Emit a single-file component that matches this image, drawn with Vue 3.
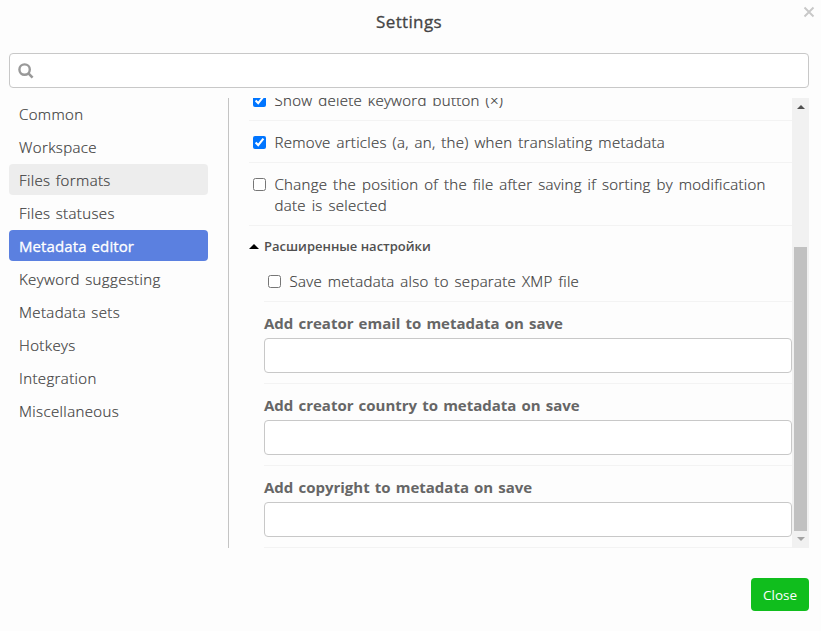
<script setup>
import { ref } from 'vue'

const sections = [
  { name: 'Common' },
  { name: 'Workspace' },
  { name: 'Files formats', hover: true },
  { name: 'Files statuses' },
  { name: 'Metadata editor', active: true },
  { name: 'Keyword suggesting' },
  { name: 'Metadata sets' },
  { name: 'Hotkeys' },
  { name: 'Integration' },
  { name: 'Miscellaneous' },
]

const options = ref([
  { label: 'Show delete keyword button (×)', checked: true },
  { label: 'Remove articles (a, an, the) when translating metadata', checked: true },
  {
    label: 'Change the position of the file after saving if sorting by modification date is selected',
    checked: false,
  },
])
const separateXmp = ref(false)

const fields = ref([
  { label: 'Add creator email to metadata on save', value: '' },
  { label: 'Add creator country to metadata on save', value: '' },
  { label: 'Add copyright to metadata on save', value: '' },
])
const query = ref('')
</script>

<template>
  <div class="dialog">
    <header class="head">
      <h1 class="title">Settings</h1>
      <button class="dismiss" type="button">
        <svg width="12" height="12" viewBox="0 0 12 12">
          <path d="M1.5 1.5 10.5 10.5M10.5 1.5 1.5 10.5" stroke="#c8c8c8" stroke-width="1.9" fill="none" />
        </svg>
      </button>
    </header>

    <label class="search">
      <svg width="16" height="16" viewBox="0 0 16 16" fill="none" stroke="#999">
        <circle cx="6.6" cy="6.6" r="5.2" stroke-width="2.4" />
        <path d="M10.4 10.4 14.6 14.6" stroke-width="2.6" />
      </svg>
      <input v-model="query" class="search-input" type="text" />
    </label>

    <div class="body">
      <nav class="nav">
        <div
          v-for="s in sections"
          :key="s.name"
          class="nav-item"
          :class="{ hover: s.hover, active: s.active }"
        >
          {{ s.name }}
        </div>
      </nav>

      <div class="pane">
        <div class="content">
          <label v-for="o in options" :key="o.label" class="option">
            <input v-model="o.checked" class="check" type="checkbox" />
            <span>{{ o.label }}</span>
          </label>
          <div class="group-head">
            <svg class="caret" width="10" height="5" viewBox="0 0 10 5"><path d="M0 5 5 0 10 5z" /></svg>
            <span>Расширенные настройки</span>
          </div>
          <div class="group">
            <label class="option nested">
              <input v-model="separateXmp" class="check" type="checkbox" />
              <span>Save metadata also to separate XMP file</span>
            </label>
            <label v-for="f in fields" :key="f.label" class="field">
              <span class="field-label">{{ f.label }}</span>
              <input v-model="f.value" class="field-input" type="text" />
            </label>
          </div>
        </div>
        <div class="scrollbar">
          <svg width="8" height="4" viewBox="0 0 8 4" fill="#505050"><path d="M0 4 4 0 8 4z" /></svg>
          <div class="thumb"></div>
          <svg width="8" height="4" viewBox="0 0 8 4" fill="#a3a3a3"><path d="M0 0h8L4 4z" /></svg>
        </div>
      </div>
    </div>

    <footer class="foot">
      <button class="close" type="button">Close</button>
    </footer>
  </div>
</template>

<style>
body {
  background: #fdfdfd;
}
</style>

<style scoped>
* {
  box-sizing: border-box;
}
.dialog {
  display: flex;
  flex-direction: column;
  height: 631px;
  padding: 0 12px 20px 9px;
  background: #fdfdfd;
  color: #3c3c3c;
  font-family: 'Open Sans', 'Noto Sans', sans-serif;
  font-size: 15px;
  font-weight: 300;
}
.head {
  position: relative;
  height: 53px;
}
.title {
  margin: 0;
  padding-top: 10px;
  font-size: 17px;
  line-height: 24px;
  font-weight: 400;
  letter-spacing: 0.35px;
  -webkit-text-stroke: 0.3px #444;
  text-align: center;
  color: #444;
}
.dismiss {
  position: absolute;
  top: 6px;
  right: -6px;
  display: flex;
  padding: 0;
  border: 0;
  background: none;
}
.search {
  display: flex;
  align-items: center;
  gap: 10px;
  height: 35px;
  padding: 0 9px 0 8px;
  border: 1px solid #c8c8c8;
  border-radius: 4px;
  background: #fff;
}
.search-input {
  flex: 1;
  border: 0;
  outline: 0;
  background: none;
  font: inherit;
}
.body {
  display: flex;
  height: 450px;
  margin-top: 10px;
}
.nav {
  display: flex;
  flex-direction: column;
  gap: 2px;
  width: 220px;
  padding-right: 20px;
  border-right: 1px solid #c4c4c4;
}
.nav-item {
  height: 31px;
  padding: 0 10px;
  border-radius: 4px;
  line-height: 32px;
  letter-spacing: 0.38px;
  word-spacing: 1px;
  white-space: nowrap;
  -webkit-text-stroke: 0.2px currentColor;
}
.nav-item.hover {
  background: #ededed;
}
.nav-item.active {
  background: #5b80e0;
  color: #fff;
  font-weight: 400;
  letter-spacing: 0.1px;
  -webkit-text-stroke: 0.3px #fff;
}
.pane {
  display: flex;
  flex: 1;
  min-width: 0;
  padding-left: 20px;
}
.content {
  display: flex;
  flex-direction: column;
  justify-content: flex-end;
  flex: 1;
  min-width: 0;
  overflow: hidden;
}
.option {
  display: flex;
  flex-shrink: 0;
  gap: 8.5px;
  padding: 11px 20px 9px 4px;
  border-bottom: 1px solid #f3f3f3;
  line-height: 21px;
  letter-spacing: 0.3px;
  word-spacing: 1.6px;
  -webkit-text-stroke: 0.2px currentColor;
}
.check {
  flex: none;
  width: 13px;
  height: 13px;
  margin: 4px 0 0;
}
.group-head {
  display: flex;
  flex-shrink: 0;
  align-items: center;
  gap: 5px;
  height: 34px;
  padding-top: 6px;
  font-size: 13px;
  font-weight: 600;
  color: #505050;
}
.group {
  flex-shrink: 0;
  padding-left: 15px;
}
.field {
  display: flex;
  flex-direction: column;
  height: 82px;
  padding-top: 11px;
  border-bottom: 1px solid #f3f3f3;
}
.field-label {
  height: 25px;
  line-height: 21px;
  font-weight: 700;
  word-spacing: 1.2px;
  color: #666;
  white-space: nowrap;
}
.field-input {
  width: 100%;
  height: 35px;
  border: 1px solid #c8c8c8;
  border-radius: 4px;
  background: #fff;
  outline: 0;
}
.scrollbar {
  display: flex;
  flex-direction: column;
  align-items: center;
  justify-content: space-between;
  width: 17px;
  padding: 7px 0;
  background: #f1f1f1;
}
.thumb {
  width: 13px;
  height: 284px;
  margin: auto 0 6px;
  background: #c1c1c1;
}
.foot {
  display: flex;
  justify-content: flex-end;
  margin-top: 30px;
}
.close {
  width: 58px;
  height: 33px;
  padding: 0;
  border: 0;
  border-radius: 4px;
  background: #10be1d;
  color: #fff;
  font: 400 13.5px 'Open Sans', sans-serif;
}
</style>
